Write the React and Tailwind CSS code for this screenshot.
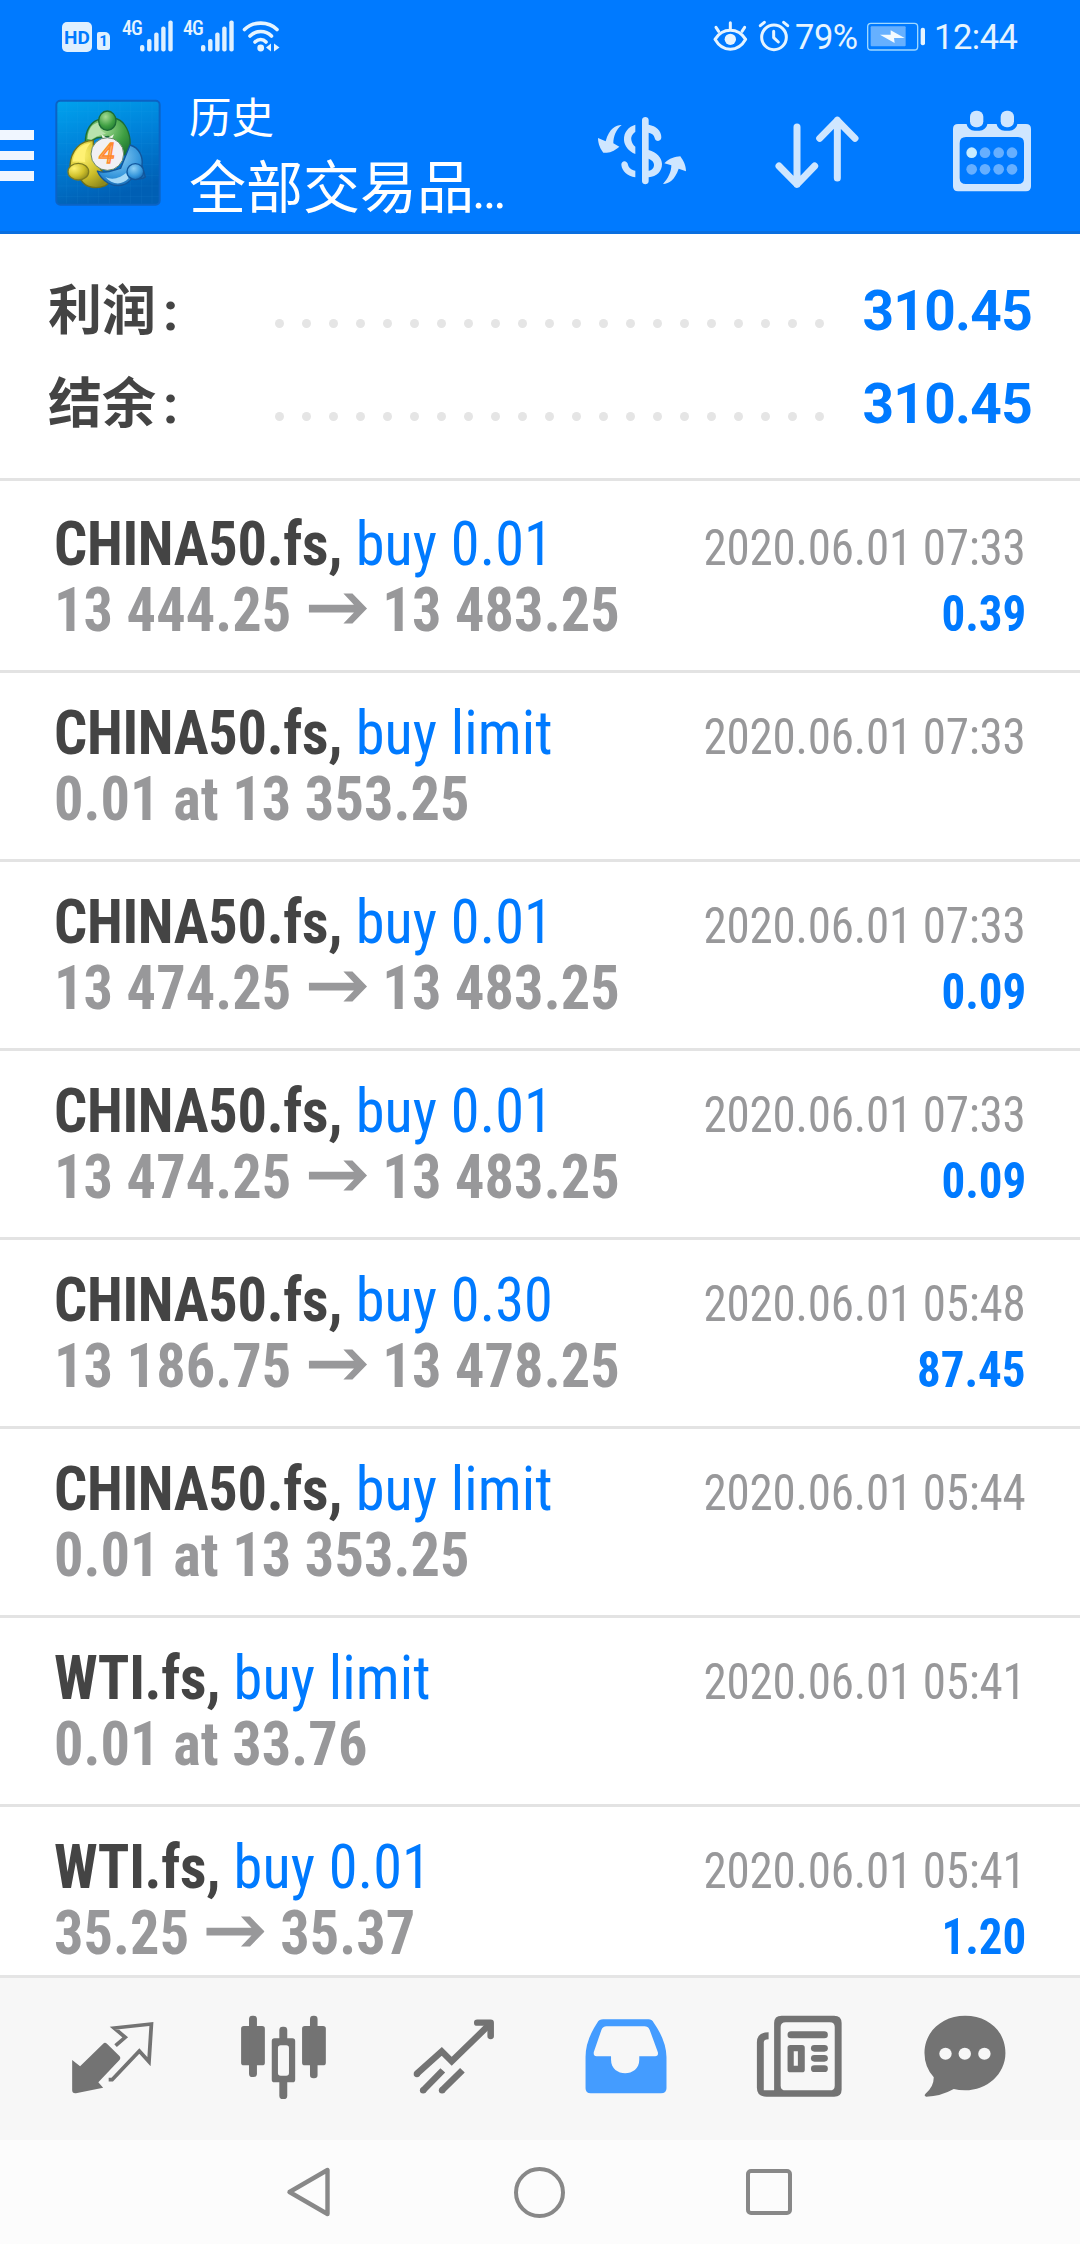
const deals = [
  { symbol: 'CHINA50.fs', action: 'buy 0.01', open: '13 444.25', close: '13 483.25', time: '2020.06.01 07:33', profit: '0.39' },
  { symbol: 'CHINA50.fs', action: 'buy limit', order: '0.01 at 13 353.25', time: '2020.06.01 07:33' },
  { symbol: 'CHINA50.fs', action: 'buy 0.01', open: '13 474.25', close: '13 483.25', time: '2020.06.01 07:33', profit: '0.09' },
  { symbol: 'CHINA50.fs', action: 'buy 0.01', open: '13 474.25', close: '13 483.25', time: '2020.06.01 07:33', profit: '0.09' },
  { symbol: 'CHINA50.fs', action: 'buy 0.30', open: '13 186.75', close: '13 478.25', time: '2020.06.01 05:48', profit: '87.45' },
  { symbol: 'CHINA50.fs', action: 'buy limit', order: '0.01 at 13 353.25', time: '2020.06.01 05:44' },
  { symbol: 'WTI.fs', action: 'buy limit', order: '0.01 at 33.76', time: '2020.06.01 05:41' },
  { symbol: 'WTI.fs', action: 'buy 0.01', open: '35.25', close: '35.37', time: '2020.06.01 05:41', profit: '1.20' },
];

const summary = [
  { label: '利润', value: '310.45' },
  { label: '结余', value: '310.45' },
];

function SignalBars() {
  return (
    <svg className="w-[33px] h-[32px]" viewBox="0 0 33 32" fill="#dff0ff">
      <rect x="0" y="25" width="4.4" height="6.6" rx="2" />
      <rect x="7.1" y="19" width="4.4" height="12.6" rx="2" />
      <rect x="14.2" y="12.5" width="4.4" height="19.1" rx="2" />
      <rect x="21.2" y="6.5" width="4.4" height="25.1" rx="2" />
      <rect x="28.3" y="0.5" width="4.4" height="31.1" rx="2" />
    </svg>
  );
}

function StatusBar() {
  return (
    <div className="h-[76px] flex text-[#e6f4ff] font-['Roboto',sans-serif]">
      <div className="mt-[22px] ml-[62px] w-[30px] h-[30px] rounded-[5px] bg-[#dff0ff] text-[#007aff] text-[19px] leading-[31px] font-bold text-center">HD</div>
      <div className="mt-[32px] ml-[5px] w-[13px] h-[18px] rounded-[2px] rounded-tr-[5px] bg-[#dff0ff] text-[#007aff] text-[15px] leading-[19px] font-bold text-center">1</div>
      <div className="mt-[19px] ml-[12px] w-[18px] text-[20px] leading-[19px] font-medium tracking-[-1px] font-['Roboto_Condensed',sans-serif]">4G</div>
      <div className="mt-[20px]"><SignalBars /></div>
      <div className="mt-[19px] ml-[10px] w-[18px] text-[20px] leading-[19px] font-medium tracking-[-1px] font-['Roboto_Condensed',sans-serif]">4G</div>
      <div className="mt-[20px]"><SignalBars /></div>
      <svg className="mt-[20px] ml-[8px] w-[38px] h-[32px]" viewBox="0 0 38 32" fill="none" stroke="#e6f4ff" strokeWidth="3.6" strokeLinecap="round">
        <path d="M2.5 9.5 C11 1 26.500 1 35 9.500" />
        <path d="M8 16 C14 10 23.500 10 29.500 16" />
        <path d="M13 22 C16.500 18.700 21 18.700 24 22" />
        <circle cx="18.700" cy="28" r="3.400" fill="#e6f4ff" stroke="none" />
        <path d="M24 27.500 L29 23.500 V31.500 Z M37.500 27.500 L32 23.500 V31.500 Z" fill="#e6f4ff" stroke="none" />
      </svg>
      <svg className="mt-[20px] ml-[431px] w-[82px] h-[34px]" viewBox="363 60 246 102" fill="none" stroke="#e6f4ff" strokeLinecap="round">
        <path d="M375 118 C398 82 444 82 467 118 C444 158 398 158 375 118 Z" strokeWidth="9" strokeLinejoin="round" />
        <circle cx="421" cy="118" r="17" fill="#e6f4ff" stroke="none" />
        <path d="M421 68 V86 M378 82 L386 94 M464 82 L456 94" strokeWidth="9" />
        <circle cx="552" cy="112" r="37" strokeWidth="9" />
        <path d="M551 94 V113 L565 126" strokeWidth="9" strokeLinejoin="round" />
        <path d="M511 77 L523 67 M593 77 L581 67" strokeWidth="9" />
      </svg>
      <div className="mt-[17px] ml-[2px] w-[71px] text-[34.500px] leading-[40px] tracking-[-0.500px]">79%</div>
      <svg className="mt-[22px] ml-[1px] w-[60px] h-[30px]" viewBox="831 66 180 90">
        <rect x="833" y="70" width="150" height="80" rx="10" fill="none" stroke="#9fd8ff" strokeWidth="4" />
        <rect x="842" y="79" width="105" height="60" rx="3" fill="#66b0ff" />
        <path d="M870 104 L902 104 L902 91 L944 114 L912 114 L914 129 Z" fill="#f4fbff" />
        <rect x="992" y="83" width="13" height="53" rx="6" fill="#e6f4ff" />
      </svg>
      <div className="mt-[17px] ml-[7px] text-[34.500px] leading-[40px] tracking-[-0.500px]">12:44</div>
    </div>
  );
}

function Logo() {
  return (
    <svg className="w-[106px] h-[107px]" viewBox="45 28 318 321">
      <defs>
        <linearGradient id="tile" x1="0" y1="0" x2="0.3" y2="1">
          <stop offset="0" stopColor="#00a3ee" />
          <stop offset="0.5" stopColor="#0080d8" />
          <stop offset="1" stopColor="#005fb4" />
        </linearGradient>
        <radialGradient id="green" cx="0.4" cy="0.3" r="0.8">
          <stop offset="0" stopColor="#a5dc94" />
          <stop offset="0.6" stopColor="#3f9f43" />
          <stop offset="1" stopColor="#1c7430" />
        </radialGradient>
        <radialGradient id="yellow" cx="0.3" cy="0.3" r="0.8">
          <stop offset="0" stopColor="#fff270" />
          <stop offset="0.6" stopColor="#cfc02b" />
          <stop offset="1" stopColor="#8f8a1c" />
        </radialGradient>
        <radialGradient id="blue" cx="0.4" cy="0.3" r="0.8">
          <stop offset="0" stopColor="#8fd0f5" />
          <stop offset="0.6" stopColor="#3596dc" />
          <stop offset="1" stopColor="#0f5ea8" />
        </radialGradient>
      </defs>
      <rect x="49" y="33" width="310" height="312" rx="12" fill="url(#tile)" stroke="#0b63c4" strokeWidth="6" />
      <path d="M80 36 V342 M112 36 V342 M144 36 V342 M176 36 V342 M208 36 V342 M240 36 V342 M272 36 V342 M304 36 V342 M336 36 V342 M52 65 H356 M52 97 H356 M52 129 H356 M52 161 H356 M52 193 H356 M52 225 H356 M52 257 H356 M52 289 H356 M52 321 H356" stroke="#39b4f0" strokeOpacity="0.13" strokeWidth="2" />
      <g strokeWidth="4" strokeLinejoin="round">
        <path d="M136 165 C134 120 155 92 184 88 C206 80 238 82 254 106 C272 132 276 168 262 198 L240 192 L205 140 L170 145 Z" fill="url(#green)" stroke="#1c6b35" />
        <path d="M142 148 C144 116 158 100 180 98 C176 116 184 126 198 132 C178 136 164 142 154 150 Z" fill="#b8e2ad" stroke="none" />
        <path d="M184 134 L202 146 L222 134 L214 152 H190 Z" fill="#eef7ea" stroke="none" />
        <path d="M90 228 C92 182 122 152 160 152 L160 210 L200 262 C214 268 210 280 196 288 C172 298 138 296 124 272 Z" fill="url(#yellow)" stroke="#6f701c" />
        <path d="M98 216 C102 182 126 162 152 160 C136 178 132 198 136 218 C122 214 108 216 98 216 Z" fill="#fff173" stroke="none" />
        <path d="M172 244 C200 256 226 238 242 236 L270 166 C298 174 310 202 306 228 L316 262 C300 276 286 262 278 262 C262 290 230 294 204 280 C188 270 178 258 172 244 Z" fill="url(#blue)" stroke="#11569c" />
        <path d="M196 262 C220 274 244 262 258 250 L266 266 C246 288 216 286 196 262 Z" fill="#a5d9f7" stroke="none" />
        <ellipse cx="202" cy="93" rx="26" ry="29" fill="url(#green)" stroke="#1c6b35" />
        <ellipse cx="115" cy="246" rx="31" ry="25" fill="url(#yellow)" stroke="#7d7c20" />
        <ellipse cx="286" cy="246" rx="25" ry="24" fill="url(#blue)" stroke="#11569c" />
      </g>
      <circle cx="202" cy="193" r="49" fill="#f1f0f4" stroke="#6b8a6a" strokeWidth="3" />
      <text x="201" y="221" textAnchor="middle" fontFamily="Roboto, sans-serif" fontSize="84" fontWeight="400" fontStyle="italic" fill="#ffb884" stroke="#ff8a2b" strokeWidth="4">4</text>
    </svg>
  );
}

function Toolbar() {
  return (
    <div className="h-[155px] flex items-start text-white">
      <div className="mt-[54px] w-[34px] flex flex-col gap-[11px]">
        <div className="h-[9.500px] bg-[#f0f6ff]" />
        <div className="h-[9.500px] bg-[#f0f6ff]" />
        <div className="h-[9.500px] bg-[#f0f6ff]" />
      </div>
      <div className="mt-[23px] ml-[21px]"><Logo /></div>
      <div className="ml-[28px] mt-[18px] w-[408px] font-['Roboto','Noto_Sans_CJK_SC',sans-serif] whitespace-nowrap">
        <div className="text-[42.500px] leading-[50px]">历史</div>
        <div className="mt-[15px] text-[57px] leading-[60px]">
          全部交易品<span className="ml-[-2px] text-[51px]">…</span>
        </div>
      </div>
      <svg className="mt-[40px] w-[90px] h-[70px]" viewBox="21 348 270 210" fill="#cfe6ff">
        <path d="M95 375 C82 374 58 382 47 424 L24 414 C24 432 32 448 40 458 C52 460 70 456 88 440 L70 430 C70 410 78 388 95 375 Z" />
        <path d="M219 552 C238 550 254 540 266 506 L288 514 C288 496 280 482 271 469 C256 470 238 474 223 490 L244 496 C244 516 234 536 219 552 Z" />
        <path d="M136 374 V395 C126 402 122 412 124 420 C126 430 130 436 136 440 V462 C116 454 103 438 102 420 C101 396 116 380 136 374 Z" />
        <path d="M94 494 C94 480 112 480 114 494 C116 504 126 510 136 512 V532 C112 528 96 514 94 494 Z" />
        <path d="M156 360 C156 348 176 348 176 360 V374 C198 378 214 392 214 412 C214 426 196 426 194 414 C192 404 186 400 176 398 V450 C200 456 216 474 216 492 C216 514 200 530 176 532 V544 C176 556 156 556 156 544 Z M176 476 V512 C188 510 192 502 192 494 C192 486 186 480 176 476 Z" fillRule="evenodd" />
      </svg>
      <svg className="mt-[40px] ml-[87px] w-[86px] h-[74px]" viewBox="552 348 258 222" fill="none" stroke="#cfe6ff" strokeWidth="21" strokeLinecap="round" strokeLinejoin="round">
        <path d="M621 381 V553 M567 498 L621 553 L674 498" />
        <path d="M742 534 V361 M689 415 L742 361 L795 415" />
      </svg>
      <svg className="mt-[34px] ml-[92px] w-[80px] h-[82px]" viewBox="1088 330 240 246">
        <path d="M1106 372 H1132 C1134 384 1144 392 1156 392 H1170 C1182 392 1192 384 1194 372 H1222 C1224 384 1234 392 1246 392 H1260 C1272 392 1282 384 1284 372 H1310 Q1325 372 1325 387 V559 Q1325 574 1310 574 H1106 Q1091 574 1091 559 V387 Q1091 372 1106 372 Z M1130 411 Q1111 411 1111 430 V534 Q1111 552 1130 552 H1286 Q1304 552 1304 534 V430 Q1304 411 1286 411 Z" fill="#cfe6ff" fillRule="evenodd" />
        <rect x="1142" y="332" width="40" height="50" rx="18" fill="#cfe6ff" />
        <rect x="1234" y="332" width="40" height="50" rx="18" fill="#cfe6ff" />
        <circle cx="1147" cy="458" r="16" fill="#c8ecff" />
        <g fill="#66afff">
          <circle cx="1187" cy="458" r="16" />
          <circle cx="1228" cy="458" r="16" />
          <circle cx="1268" cy="458" r="16" />
          <circle cx="1147" cy="508" r="16" />
          <circle cx="1187" cy="508" r="16" />
          <circle cx="1228" cy="508" r="16" />
          <circle cx="1268" cy="508" r="16" />
        </g>
      </svg>
    </div>
  );
}

function SummaryRow({ label, value }) {
  return (
    <div className="h-[93px] pl-[48px] pr-[48px] flex items-center font-bold">
      <span className="w-[227px] text-[54px] leading-[93px] text-[#444444] font-['Roboto','Noto_Sans_CJK_SC',sans-serif]">
        {label}<span className="ml-[7px]">:</span>
      </span>
      <span className="mt-[23px] flex gap-[18px]">
        {Array.from({ length: 21 }, (_, i) => (
          <span key={i} className="w-[9px] h-[9px] rounded-full bg-[#e5e5e5]" />
        ))}
      </span>
      <span className="ml-auto text-[55px] leading-[93px] text-[#007aff] tracking-[-0.700px] font-['Roboto',sans-serif]">{value}</span>
    </div>
  );
}

function Arrow() {
  return (
    <svg className="inline-block align-baseline mb-[7px] ml-[4px] mr-[2px] w-[62px] h-[31px]" viewBox="0 0 58 31" preserveAspectRatio="none" fill="#98989a">
      <path d="M0 11.700 H45 L34.500 0.500 H43.500 L58 15.500 L43.500 30.500 H34.500 L45 19.500 H0 Z" />
    </svg>
  );
}

function DealRow({ deal }) {
  return (
    <div className="shrink-0 h-[189px] pt-[27px] pl-[54px] pr-[54px] border-b-[3px] border-[#e3e3e3] font-['Roboto_Condensed',sans-serif] leading-[66px] whitespace-nowrap">
      <div className="h-[66px] flex items-baseline justify-between">
        <div className="text-[62px] origin-left scale-x-[0.94]">
          <span className="font-bold text-[#444444] tracking-[-0.300px]">{deal.symbol},</span>{' '}
          <span className="text-[#007aff] tracking-[0.150px]">{deal.action}</span>
        </div>
        <div className="text-[50px] text-[#98989a] tracking-[-0.200px] origin-right scale-x-[0.94]">{deal.time}</div>
      </div>
      <div className="h-[66px] flex items-baseline justify-between font-bold">
        <div className="text-[62px] text-[#98989a] tracking-[0.100px] origin-left scale-x-[0.94]">
          {deal.order ? deal.order : (
            <>
              {deal.open} <Arrow /> {deal.close}
            </>
          )}
        </div>
        {deal.profit && <div className="text-[50px] text-[#007aff] origin-right scale-x-[0.94]">{deal.profit}</div>}
      </div>
    </div>
  );
}

function TabIcon({ x, children }) {
  return (
    <div className="flex-1 flex justify-center">
      <svg className="w-[93px] h-[93px]" viewBox={`${x} 155 270 279`} preserveAspectRatio="none" fill="#737373">
        {children}
      </svg>
    </div>
  );
}

function TabBar() {
  return (
    <div className="h-[165px] shrink-0 bg-[#f7f7f7] border-t-[3px] border-[#e5e5e5] pt-[34px] px-[28px] flex">
      <TabIcon x={194}>
        <path d="M209 299 L232 318 L299 250 Q304 244 310 250 L347 288 Q351 293 347 298 L285 366 L299 382 L220 399 Q209 400 209 390 Z" />
        <path d="M335 256 L363 231 L331 203 L439 191 L432 304 L404 272 L325 358 H315" fill="none" stroke="#737373" strokeWidth="11" />
      </TabIcon>
      <TabIcon x={690}>
        <rect x="699" y="197" width="69" height="118" rx="8" />
        <rect x="722" y="166" width="23" height="184" rx="10" />
        <rect x="876" y="197" width="69" height="118" rx="8" />
        <rect x="899" y="166" width="22" height="188" rx="10" />
        <rect x="810" y="199" width="23" height="50" rx="10" />
        <rect x="810" y="354" width="23" height="62" rx="10" />
        <path d="M796 234 H848 Q856 234 856 242 V358 Q856 366 848 366 H796 Q788 366 788 358 V242 Q788 234 796 234 Z M814 255 Q806 255 806 263 V338 Q806 346 814 346 H830 Q838 346 838 338 V263 Q838 255 830 255 Z" fillRule="evenodd" />
      </TabIcon>
      <TabIcon x={1185}>
        <g fill="none" stroke="#737373" strokeWidth="19">
          <path d="M1211 340 L1283 273 L1312 303 L1422 192" />
          <path d="M1386 187 H1425 V227" strokeLinecap="round" strokeLinejoin="round" />
          <path d="M1229 390 L1286 330 M1284 390 L1343 330" />
        </g>
        <circle cx="1211" cy="341" r="9.500" />
        <circle cx="1229" cy="390" r="9.500" />
        <circle cx="1284" cy="390" r="9.500" />
      </TabIcon>
      <TabIcon x={115}>
        <path d="M185 177 H317 Q326 177 332 187 Q368 240 369 290 V384 Q369 399 353 399 H149 Q134 399 134 384 V290 Q134 240 168 187 Q174 177 185 177 Z M195 198 Q184 198 180 209 L158 275 Q156 288 166 288 H208 V298 C208 352 290 352 290 298 V288 H336 Q346 287 344 276 L320 208 Q315 198 305 198 Z" fill="#449cff" fillRule="evenodd" />
      </TabIcon>
      <TabIcon x={608}>
        <path d="M700 166 H852 Q874 166 874 188 V388 Q874 409 852 409 H656 Q628 409 628 382 V246 Q628 216 662 216 V237 Q648 237 648 246 V390 H678 V188 Q678 166 700 166 Z M712 186 Q697 186 697 200 V376 Q697 390 712 390 H840 Q854 390 854 376 V200 Q854 186 840 186 Z" fillRule="evenodd" />
        <rect x="717" y="213" width="117" height="21" rx="10" />
        <path d="M725 254 H759 Q767 254 767 262 V328 Q767 336 759 336 H725 Q717 336 717 328 V262 Q717 254 725 254 Z M735 273 V316 H747 V273 Z" fillRule="evenodd" />
        <rect x="785" y="254" width="49" height="20" rx="10" />
        <rect x="785" y="284" width="49" height="20" rx="10" />
        <rect x="785" y="315" width="49" height="20" rx="10" />
      </TabIcon>
      <TabIcon x={1104}>
        <path d="M1235 166 C1304 166 1352 214 1352 278 C1352 342 1298 390 1235 390 Q1216 390 1202 386 Q1164 408 1122 409 Q1114 407 1120 400 Q1144 380 1144 351 Q1117 320 1117 278 C1117 214 1168 166 1235 166 Z" />
        <g fill="#f7f7f7">
          <circle cx="1178" cy="280" r="18" />
          <circle cx="1234" cy="280" r="18" />
          <circle cx="1291" cy="280" r="18" />
        </g>
      </TabIcon>
    </div>
  );
}

function NavBar() {
  return (
    <div className="h-[104px] shrink-0 bg-[#fcfcfc] pl-[286px] flex items-start">
      <svg className="mt-[26px] w-[46px] h-[52px]" viewBox="0 0 46 52" fill="none" stroke="#888888" strokeWidth="4.400" strokeLinejoin="round">
        <path d="M41.500 4 V48 L3.500 26 Z" />
      </svg>
      <div className="mt-[27px] ml-[182px] w-[51px] h-[51px] rounded-full border-[4.500px] border-[#888888]" />
      <div className="mt-[29px] ml-[181px] w-[46px] h-[46px] rounded-[5px] border-[4.500px] border-[#888888]" />
    </div>
  );
}

export default function App() {
  return (
    <div className="w-[1080px] h-[2244px] flex flex-col bg-white overflow-hidden">
      <header className="h-[234px] shrink-0 bg-[#007aff] border-b-[3px] border-[#0a6fe0]">
        <StatusBar />
        <Toolbar />
      </header>
      <section className="h-[247px] shrink-0 pt-[31px] border-b-[3px] border-[#e3e3e3]">
        {summary.map((row) => (
          <SummaryRow key={row.label} label={row.label} value={row.value} />
        ))}
      </section>
      <main className="flex-1 min-h-0 pt-[3px] flex flex-col overflow-hidden">
        {deals.map((deal, i) => (
          <DealRow key={i} deal={deal} />
        ))}
      </main>
      <TabBar />
      <NavBar />
    </div>
  );
}
